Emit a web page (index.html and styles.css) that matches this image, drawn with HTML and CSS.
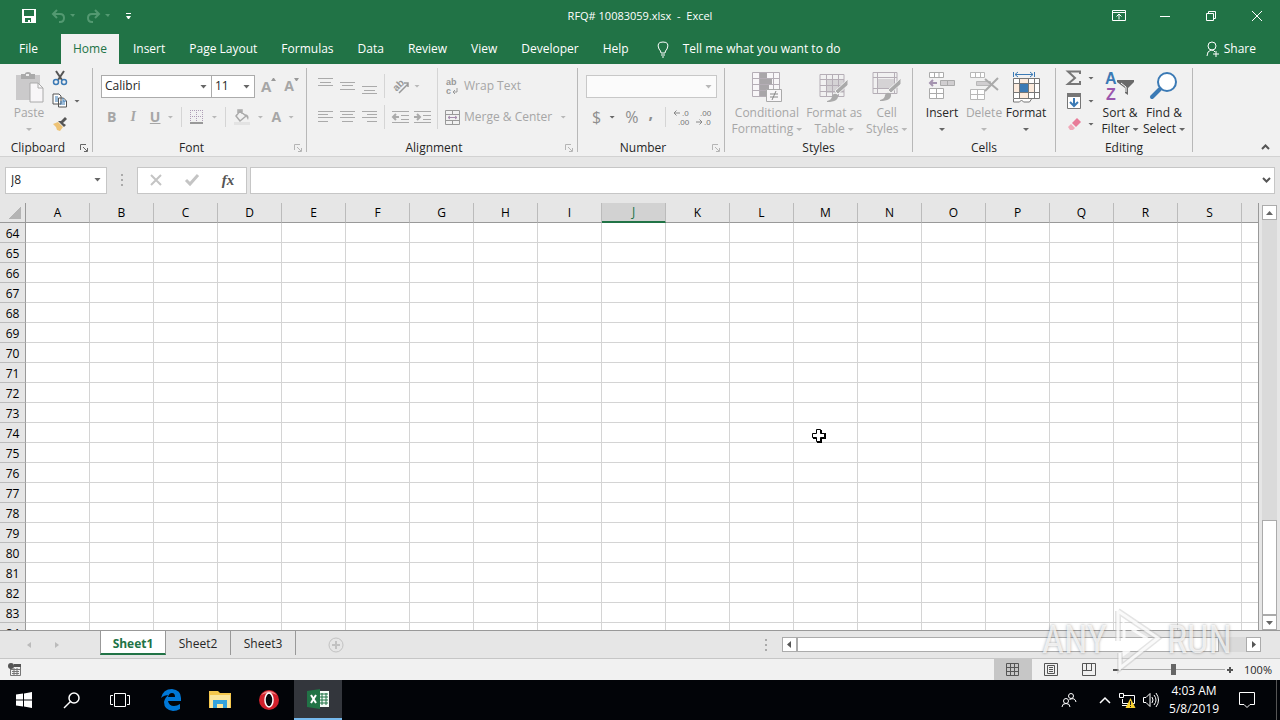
FILE: index.html
```html
<!DOCTYPE html>
<html lang="en">

<head>
    <meta charset="UTF-8">
    <meta name="viewport" content="width=device-width, initial-scale=1.0">
    <title>RFQ# 10083059.xlsx - Excel</title>
    <link rel="stylesheet" href="styles.css">
</head>

<body>
    <header class="titlebar">
        <div class="quick">
            <button aria-label="Save"><svg width="14" height="14" viewBox="0 0 14 14"><path d="M0 0h14v14H0z" fill="#fff"/><path d="M2 1h10v6H2zM3 9h8v4H3z" fill="#217346"/><path d="M6 11h2v2H6zM9 9h2v4H9z" fill="#fff"/></svg></button>
            <button class="faded" aria-label="Undo"><svg width="24" height="14" viewBox="0 0 24 14"><path d="M6 1L2 5l4 4M2 5h7q4 0 4 4t-4 4H8" fill="none" stroke="#539971" stroke-width="2"/><path d="M19 5h5l-2 3z" fill="#539971"/></svg></button>
            <button class="faded" aria-label="Redo"><svg width="24" height="14" viewBox="0 0 24 14"><path d="M9 1l4 4-4 4M13 5H6q-4 0-4 4t4 4h1" fill="none" stroke="#539971" stroke-width="2"/><path d="M19 5h5l-2 3z" fill="#539971"/></svg></button>
            <button aria-label="Customize"><svg width="7" height="7" viewBox="0 0 7 7"><path d="M1 0h5v1H1zM1 3h5l-2 3H3z" fill="#fff"/></svg></button>
        </div>
        <h1>RFQ# 10083059.xlsx&nbsp; -&nbsp; Excel</h1>
        <div class="window-buttons">
            <button aria-label="Ribbon options"><svg width="14" height="12" viewBox="0 0 14 12"><path d="M.5.5h13v10H.5zM1 2.500h12M7 9.500V4M4.500 6.500L7 4l2.500 2.500" fill="none" stroke="#fff"/></svg></button>
            <button aria-label="Minimize"><svg width="10" height="10" viewBox="0 0 10 10"><path d="M0 5h10v1H0z" fill="#fff"/></svg></button>
            <button aria-label="Restore"><svg width="10" height="10" viewBox="0 0 10 10"><path d="M.5 2.500h7v7h-7zM2.500 2V.5h7v7H8" fill="none" stroke="#fff"/></svg></button>
            <button aria-label="Close"><svg width="10" height="10" viewBox="0 0 10 10"><path d="M0 0l10 10M10 0L0 10" stroke="#fff"/></svg></button>
        </div>
    </header>

    <nav class="tabs">
        <button class="file">File</button>
        <button class="active">Home</button>
        <button>Insert</button>
        <button>Page Layout</button>
        <button>Formulas</button>
        <button>Data</button>
        <button>Review</button>
        <button>View</button>
        <button>Developer</button>
        <button>Help</button>
        <button class="tell"><svg width="12" height="17" viewBox="0 0 12 17"><path d="M4 12q0-2-2-4-3-7 4-7t4 7q-2 2-2 4zM4 14h4M5 16h2" fill="none" stroke="#fff"/></svg>Tell me what you want to do</button>
        <button class="share"><svg width="14" height="17" viewBox="0 0 14 17"><circle cx="6" cy="5" r="4" fill="none" stroke="#fff"/><path d="M1 15q0-5 4-6 3 0 4 2M7 13h6M10 10v6" fill="none" stroke="#fff"/></svg>Share</button>
    </nav>

    <main class="ribbon">
        <section class="group clipboard">
            <div class="controls">
                <button class="big off"><svg width="30" height="32" viewBox="0 0 30 32"><path d="M2 3h24v25H2z" fill="#cbcacb"/><path d="M7 2h4q0-2 3-2t3 2h4v5H7z" fill="#aaa"/><path d="M12 2h3v2h-3z" fill="#eee"/><path d="M16 11h8l5 5v14H16z" fill="#f8f6f8" stroke="#aaa"/><path d="M24 11v5h5" fill="none" stroke="#aaa"/></svg><span>Paste</span><i class="caret"></i></button>
                <div class="stack">
                    <button aria-label="Cut"><svg width="16" height="16" viewBox="0 0 16 16"><path d="M4 1l6 9M12 1L6 10" stroke="#555" stroke-width="2"/><circle cx="4" cy="12" r="2.500" fill="none" stroke="#3b7ab5" stroke-width="1.500"/><circle cx="12" cy="12" r="2.500" fill="none" stroke="#3b7ab5" stroke-width="1.500"/></svg></button>
                    <button aria-label="Copy"><svg width="16" height="16" viewBox="0 0 16 16"><path d="M1 1h6l2 2v8H1zM6.500 5h5l3 3v6h-8z" fill="#fff" stroke="#555"/><path d="M3 4h3M3 6h3M3 8h3M8 9h5M8 11h5M11 5v3h3" fill="none" stroke="#3b7ab5"/></svg><i class="caret dark"></i></button>
                    <button aria-label="Format Painter"><svg width="16" height="16" viewBox="0 0 16 16"><path d="M1 8l5-2 5 5-3 4-3-1-1-3z" fill="#eec376"/><path d="M6 5l6 6 2-2-3-2 4-4-2-2-4 4z" fill="#555"/></svg></button>
                </div>
            </div>
            <footer>Clipboard<svg class="launch dark" width="8" height="8" viewBox="0 0 8 8"><path d="M.5 6V.5H6M3 3l4 4M7.500 4v3.500H4"/></svg></footer>
        </section>

        <section class="group font">
            <div class="controls rows">
                <div class="row">
                    <span class="combo face"><select aria-label="Font"><option>Calibri</option></select></span><span class="combo size"><select aria-label="Font size"><option>11</option></select></span>
                    <button class="off grow" aria-label="Increase font size"><b>A</b><svg width="5" height="4" viewBox="0 0 5 4"><path d="M0 3l2-3h1l2 3z" fill="#999"/></svg></button>
                    <button class="off shrink" aria-label="Decrease font size"><b>A</b><svg width="5" height="4" viewBox="0 0 5 4"><path d="M0 0h5L3 3H2z" fill="#999"/></svg></button>
                </div>
                <div class="row letters">
                    <button class="off"><b>B</b></button>
                    <button class="off"><em>I</em></button>
                    <button class="off"><u>U</u><i class="caret"></i></button>
                    <hr>
                    <button class="off" aria-label="Borders"><svg width="14" height="14" viewBox="0 0 14 14"><path d="M.5 0v13M6.500 0v13M12.500 0v13M0 .5h13M0 6.500h13" stroke="#ae9eb6" stroke-dasharray="1 1"/><path d="M0 13h13" stroke="#999" stroke-width="2"/></svg><i class="caret"></i></button>
                    <hr>
                    <button class="off" aria-label="Fill Color"><svg width="16" height="16" viewBox="0 0 16 16"><path d="M6 2l6 5-6 5-4-5zM4 5V1h4v4" fill="none" stroke="#aaa" stroke-width="1.500"/><path d="M11 5q5 1 3 6l-2-4z" fill="#aaa"/><path d="M0 13h16v3H0z" fill="#e3e3e3"/></svg><i class="caret"></i></button>
                    <button class="off"><b>A</b><i class="caret"></i></button>
                </div>
            </div>
            <footer>Font<svg class="launch" width="8" height="8" viewBox="0 0 8 8"><path d="M.5 6V.5H6M3 3l4 4M7.500 4v3.500H4"/></svg></footer>
        </section>

        <section class="group alignment">
            <div class="controls">
                <div class="rows three">
                    <div class="row">
                        <button aria-label="Top Align"><svg class="lines" width="15" height="18" viewBox="0 0 15 18"><path d="M0 1.500h15M2 5.500h11M0 8.500h15"/></svg></button>
                        <button aria-label="Middle Align"><svg class="lines" width="15" height="18" viewBox="0 0 15 18"><path d="M0 5.500h15M2 8.500h11M0 12.500h15"/></svg></button>
                        <button aria-label="Bottom Align"><svg class="lines" width="15" height="18" viewBox="0 0 15 18"><path d="M0 9.500h15M2 13.500h11M0 16.500h15"/></svg></button>
                    </div>
                    <div class="row">
                        <button aria-label="Align Left"><svg class="lines" width="15" height="14" viewBox="0 0 15 14"><path d="M0 1.500h15M0 4.500h10M0 7.500h15M0 11.500h10"/></svg></button>
                        <button aria-label="Center"><svg class="lines" width="15" height="14" viewBox="0 0 15 14"><path d="M0 1.500h15M2 4.500h11M0 7.500h15M2 11.500h11"/></svg></button>
                        <button aria-label="Align Right"><svg class="lines" width="15" height="14" viewBox="0 0 15 14"><path d="M0 1.500h15M5 4.500h10M0 7.500h15M5 11.500h10"/></svg></button>
                    </div>
                </div>
                <div class="rows bordered">
                    <div class="row">
                        <button aria-label="Orientation"><svg width="18" height="18" viewBox="0 0 18 18"><text x="1" y="12" font-size="10" font-weight="bold" fill="#999" transform="rotate(-45 6 9)">ab</text><path d="M7 16l9-9M12 6h4v4" fill="none" stroke="#999" stroke-width="1.500"/></svg><i class="caret"></i></button>
                    </div>
                    <div class="row">
                        <button aria-label="Decrease Indent"><svg class="lines" width="17" height="14" viewBox="0 0 17 14"><path d="M0 1.500h17M9 5.500h8M9 9.500h8M0 12.500h17"/><path d="M1 7h6M4 4L1 7l3 3" stroke-width="2"/></svg></button>
                        <button aria-label="Increase Indent"><svg class="lines" width="17" height="14" viewBox="0 0 17 14"><path d="M0 1.500h17M9 5.500h8M9 9.500h8M0 12.500h17"/><path d="M0 7h6M3 4l3 3-3 3" stroke-width="2"/></svg></button>
                    </div>
                </div>
                <div class="rows wide">
                    <div class="row">
                        <button class="off"><svg width="15" height="20" viewBox="0 0 15 20"><text x="1" y="9" font-size="9" font-weight="bold" fill="#999">ab</text><text x="1" y="18" font-size="9" font-weight="bold" fill="#999">c</text><path d="M12 12v4H8M10 14l-2 2 2 2" fill="none" stroke="#999"/></svg>Wrap Text</button>
                    </div>
                    <div class="row">
                        <button class="off"><svg width="15" height="15" viewBox="0 0 15 15"><path d="M.5.5h14v14H.5zM.5 4.500h14M.5 10.500h14M7.500 0v4M7.500 11v4" fill="none" stroke="#999"/><path d="M3 7.500h9M5 6L3 7.500 5 9M10 6l2 1.500L10 9" fill="none" stroke="#a58cad"/></svg>Merge &amp; Center<i class="caret"></i></button>
                    </div>
                </div>
            </div>
            <footer>Alignment<svg class="launch" width="8" height="8" viewBox="0 0 8 8"><path d="M.5 6V.5H6M3 3l4 4M7.500 4v3.500H4"/></svg></footer>
        </section>

        <section class="group number">
            <div class="controls rows">
                <div class="row"><span class="combo format"><select aria-label="Number Format" disabled><option></option></select></span></div>
                <div class="row symbols">
                    <button class="off">$<i class="caret dark"></i></button>
                    <button class="off">%</button>
                    <button class="off"><b>,</b></button>
                    <hr>
                    <button aria-label="Increase Decimal"><svg width="16" height="18" viewBox="0 0 16 18"><text x="8" y="8" font-size="8" fill="#777">.0</text><text x="4" y="17" font-size="8" fill="#777">.00</text><path d="M0 5h6M2.500 2.500L0 5l2.500 2.500" fill="none" stroke="#888"/></svg></button>
                    <button aria-label="Decrease Decimal"><svg width="16" height="18" viewBox="0 0 16 18"><text x="4" y="8" font-size="8" fill="#777">.00</text><text x="8" y="17" font-size="8" fill="#777">.0</text><path d="M0 14h6M3.500 11.500L6 14l-2.500 2.500" fill="none" stroke="#888"/></svg></button>
                </div>
            </div>
            <footer>Number<svg class="launch" width="8" height="8" viewBox="0 0 8 8"><path d="M.5 6V.5H6M3 3l4 4M7.500 4v3.500H4"/></svg></footer>
        </section>

        <section class="group styles">
            <div class="controls">
                <button class="big off"><svg width="30" height="32" viewBox="0 0 30 32"><path d="M1 1h27v24H1z" fill="#f8f6f8"/><path d="M8 1h7v5h5v6h-3v6h-2v7H8z" fill="#a9a6a9"/><path d="M.5.5h27v24H.5zM.5 6.500h27M.5 12.500h27M.5 18.500h27M7.500 0v25M21.500 0v25" fill="none" stroke="#b5aeb6"/><path d="M14.500 17.500h15v12h-15z" fill="#f8f6f8" stroke="#aaa"/><path d="M18 22h8M18 25h8M24 19l-4 9" stroke="#888"/></svg><span>Conditional<br>Formatting<i class="caret"></i></span></button>
                <button class="big off"><svg width="30" height="32" viewBox="0 0 30 32"><path d="M8 8h17v13H8z" fill="#d5d3d5"/><path d="M1 2.500h24v22H1zM1 7.500h24M1 13.500h24M1 19.500h24M7.500 2v22M13.500 2v22M19.500 2v22" fill="none" stroke="#b5aeb6"/><path d="M29 7v6l-10 9-3-3z" fill="#aaa" stroke="#f1f1f1"/><path d="M8 29q5-1 5-5 2-4 6-1 1 7-11 7z" fill="#aaa"/></svg><span>Format as<br>Table<i class="caret"></i></span></button>
                <button class="big off"><svg width="30" height="32" viewBox="0 0 30 32"><path d="M6 7h16v10H6z" fill="#d5d3d5"/><path d="M1 .5h24v21H1zM1 5.500h24M1 16.500h24M5.500 0v22M22.500 0v22" fill="none" stroke="#b5aeb6"/><path d="M29 6v6l-10 9-3-3z" fill="#aaa" stroke="#f1f1f1"/><path d="M8 28q5-1 5-5 2-4 6-1 1 7-11 7z" fill="#aaa"/></svg><span>Cell<br>Styles<i class="caret"></i></span></button>
            </div>
            <footer>Styles</footer>
        </section>

        <section class="group cells">
            <div class="controls">
                <button class="big"><svg width="30" height="32" viewBox="0 0 30 32"><path d="M2.500.5h14v5h-14zM7.500.5v5M12 .5v5M2.500 16.500h14v10h-14zM2.500 21.500h14M9.500 16v11" fill="#fff" stroke="#aaa"/><path d="M13.500 8.500h14v5h-14zM20.500 8v6" fill="#d0ced0" stroke="#aaa"/><path d="M3 11h7M6 8l-3 3 3 3" fill="none" stroke="#a594b0" stroke-width="2"/></svg><span>Insert</span><i class="caret dark"></i></button>
                <button class="big off"><svg width="30" height="32" viewBox="0 0 30 32"><path d="M1.500.5h14v5h-14zM6.500.5v5M11.500.5v5M1.500 17.500h14v10h-14zM1.500 22.500h14M8.500 17v11" fill="#fff" stroke="#b8b8b8"/><path d="M7.500 9.500h14v4h-14z" fill="#d0ced0" stroke="#b8b8b8"/><path d="M16 7l13 11M29 6L16 19" stroke="#aaa" stroke-width="2"/></svg><span>Delete</span><i class="caret"></i></button>
                <button class="big"><svg width="30" height="32" viewBox="0 0 30 32"><path d="M2.500 6.500h26v20h-26z" fill="#fff"/><path d="M9 6.500h8v5H9zM2.500 12h6v8h-6zM18 12h5v8h-5zM9 21h8v5H9z" fill="#fcebdd"/><path d="M2.500 6.500h26v20h-26zM2 11.500h26M2 20.500h26M8.500 6v20M17.500 6v20M23.500 6v20" fill="none" stroke="#777"/><path d="M9 12h8v8H9z" fill="#3b7ab5"/><path d="M2.500 0v5M23.500 0v5M4 2.500h18M7 0L4 2.500 7 5M19 0l3 2.500L19 5" fill="none" stroke="#3b7ab5"/><path d="M2.500 27v3h6l2-2 2 2h6l2-3" fill="#fff" stroke="#777"/></svg><span>Format</span><i class="caret dark"></i></button>
            </div>
            <footer>Cells</footer>
        </section>

        <section class="group editing">
            <div class="controls">
                <div class="stack">
                    <button aria-label="AutoSum"><svg width="16" height="16" viewBox="0 0 16 16"><path d="M14 4V1.500H2L9 8l-7 6h12v-3" fill="none" stroke="#777" stroke-width="2"/></svg><i class="caret dark"></i></button>
                    <button aria-label="Fill"><svg width="16" height="16" viewBox="0 0 16 16"><path d="M1.500.5h13v15h-13z" fill="#fff" stroke="#777"/><path d="M1 0h14v4H1z" fill="#777"/><path d="M8 5v8M4 9l4 4 4-4" fill="none" stroke="#3b7ab5" stroke-width="2"/></svg><i class="caret dark"></i></button>
                    <button aria-label="Clear"><svg width="16" height="16" viewBox="0 0 16 16"><path d="M6 7l5-5 4 4-5 5z" fill="#e87b98"/><path d="M5 8l4 4-2 2H4l-2-3z" fill="#f1a9b9"/></svg><i class="caret dark"></i></button>
                </div>
                <button class="big"><svg width="30" height="32" viewBox="0 0 30 32"><text x="0" y="12" font-size="16" font-weight="bold" fill="#3b7ab5">A</text><text x="1" y="28" font-size="16" font-weight="bold" fill="#9b57ad">Z</text><path d="M12 8h17v2l-6 6v7l-3-2v-5l-8-6z" fill="#6a6a6a"/><path d="M16 11l5 4v5" fill="none" stroke="#fff"/></svg><span>Sort &amp;<br>Filter<i class="caret dark"></i></span></button>
                <button class="big"><svg width="30" height="32" viewBox="0 0 30 32"><circle cx="18" cy="10" r="9" fill="#fff" stroke="#3b7ab5" stroke-width="2"/><path d="M11 17l-8 8" stroke="#3b7ab5" stroke-width="4" stroke-linecap="round"/></svg><span>Find &amp;<br>Select<i class="caret dark"></i></span></button>
            </div>
            <footer>Editing</footer>
        </section>
        <button class="collapse" aria-label="Collapse the Ribbon"><svg width="9" height="6" viewBox="0 0 9 6"><path d="M1 5l3.500-3.500L8 5" fill="none" stroke="#555" stroke-width="2"/></svg></button>
    </main>

    <div class="formula">
        <span class="combo namebox"><input type="text" aria-label="Name Box" value="J8"></span>
        <span class="dots"></span>
        <div class="entry">
            <button aria-label="Cancel"><svg width="12" height="12" viewBox="0 0 12 12"><path d="M1 1l10 10M11 1L1 11" stroke="#c4c4c4" stroke-width="2"/></svg></button>
            <button aria-label="Enter"><svg width="14" height="12" viewBox="0 0 14 12"><path d="M1 6l4 4 8-9" fill="none" stroke="#c4c4c4" stroke-width="3"/></svg></button>
            <button class="fx">fx</button>
        </div>
        <div class="bar"><input type="text" aria-label="Formula Bar"><svg width="9" height="6" viewBox="0 0 9 6"><path d="M1 1l3.500 3.500L8 1" fill="none" stroke="#555" stroke-width="2"/></svg></div>
    </div>

    <div class="workspace">
        <div class="sheet">
            <table>
                <thead><tr id="columns"><th class="corner"></th></tr></thead>
                <tbody id="cells"></tbody>
            </table>
        </div>
        <div class="scroll vertical">
            <button aria-label="Scroll up"><svg width="7" height="4" viewBox="0 0 7 4"><path d="M0 4l3.500-4L7 4z" fill="#666"/></svg></button>
            <div class="track"><div class="thumb"></div></div>
            <button aria-label="Scroll down"><svg width="7" height="4" viewBox="0 0 7 4"><path d="M0 0l3.500 4L7 0z" fill="#666"/></svg></button>
        </div>
        <svg class="cursor" width="16" height="16" viewBox="0 0 16 16"><path d="M6 2h5v3h4v6h-4v4H6v-4H2V6h4z" fill="#000"/><path d="M5.500 1.500h4v4h4v4h-4v4h-4v-4h-4v-4h4z" fill="#fff" stroke="#000"/></svg>
    </div>

    <div class="sheets">
        <div class="arrows">
            <button aria-label="Previous sheet"><svg width="4" height="6" viewBox="0 0 4 6"><path d="M4 0v6L0 3z" fill="#bbb"/></svg></button>
            <button aria-label="Next sheet"><svg width="4" height="6" viewBox="0 0 4 6"><path d="M0 0v6l4-3z" fill="#bbb"/></svg></button>
        </div>
        <button class="tab active">Sheet1</button>
        <button class="tab">Sheet2</button>
        <button class="tab">Sheet3</button>
        <button class="add" aria-label="New sheet"><svg width="16" height="16" viewBox="0 0 16 16"><circle cx="8" cy="8" r="7" fill="none" stroke="#c2c2c2"/><path d="M8 4v8M4 8h8" stroke="#c2c2c2" stroke-width="2"/></svg></button>
        <span class="dots"></span>
        <div class="scroll horizontal">
            <button aria-label="Scroll left"><svg width="4" height="7" viewBox="0 0 4 7"><path d="M4 0v7L0 3.500z" fill="#555"/></svg></button>
            <div class="track"><div class="thumb"></div></div>
            <button aria-label="Scroll right"><svg width="4" height="7" viewBox="0 0 4 7"><path d="M0 0v7l4-3.500z" fill="#555"/></svg></button>
        </div>
    </div>

    <div class="status">
        <button class="macro" aria-label="Record macro"><svg width="14" height="14" viewBox="0 0 14 14"><path d="M2.500 3.500h10v9h-10zM2 6.500h10M4 8.500h7M4 10.500h7M6 5v7M9 5v7" fill="none" stroke="#777"/><path d="M6 1h7v3H6z" fill="#555"/><circle cx="3" cy="3" r="3" fill="#555"/></svg></button>
        <button class="view active" aria-label="Normal"><svg width="14" height="14" viewBox="0 0 14 14"><path d="M.5.500h12v12H.5zM.5 4.500h12M.5 8.500h12M4.500 0v13M8.500 0v13" fill="none" stroke="#555"/></svg></button>
        <button class="view" aria-label="Page Layout"><svg width="14" height="14" viewBox="0 0 14 14"><path d="M.5.500h13v12H.5zM3.500 2.500h7v8h-7zM5 4.500h4M5 6.500h4M5 8.500h4" fill="none" stroke="#555"/></svg></button>
        <button class="view" aria-label="Page Break Preview"><svg width="14" height="14" viewBox="0 0 14 14"><path d="M.5.500h13v12H.5zM4.500 0v8M9.500 0v8M0 7.500h10" fill="none" stroke="#555"/></svg></button>
        <div class="zoom">
            <button aria-label="Zoom out"><svg width="8" height="8" viewBox="0 0 8 8"><path d="M1 3h6v2H1z" fill="#555"/></svg></button>
            <input type="range" aria-label="Zoom" min="0" max="200" value="100">
            <button aria-label="Zoom in"><svg width="8" height="8" viewBox="0 0 8 8"><path d="M1 3h6v2H1zM3 1h2v6H3z" fill="#555"/></svg></button>
            <span>100%</span>
        </div>
    </div>

    <div class="taskbar">
        <div class="system">
            <button aria-label="Start"><svg width="16" height="16" viewBox="0 0 16 16"><path d="M0 2.500L7 1.500v6H0zM8 1.400L16 0v7.500H8zM0 8.500h7v6l-7-1zM8 8.500h8V16l-8-1.400z" fill="#fff"/></svg></button>
            <button aria-label="Search"><svg width="18" height="18" viewBox="0 0 18 18"><circle cx="11" cy="7" r="5" fill="none" stroke="#fff" stroke-width="1.500"/><path d="M8 10l-7 7" stroke="#fff" stroke-width="1.500"/></svg></button>
            <button aria-label="Task View"><svg width="20" height="16" viewBox="0 0 20 16"><path d="M4.500 1.500h11v13h-11zM3 3.500H.5v9H3M17 3.500h2.500v9H17" fill="none" stroke="#fff"/></svg></button>
        </div>
        <div class="apps">
            <button aria-label="Edge"><svg width="22" height="22" viewBox="0 0 22 22"><path d="M1 9Q3 0 12 0q9 1 9 9v3H8q1 5 6 5 3 0 6-2v5q-3 2-7 2-9-1-9-9 1-5 5-7-5 0-8 3zm7-1h7q0-4-3-4T8 8z" fill="#0078d7"/></svg></button>
            <button aria-label="File Explorer"><svg width="22" height="20" viewBox="0 0 22 20"><path d="M0 1h9l2 2h11v15H0z" fill="#f5c84d"/><path d="M1 5h20v13H1z" fill="#fce79d"/><path d="M4 18v-8h14v8h-4v-4H8v4z" fill="#35a4dd"/></svg></button>
            <button aria-label="Opera"><svg width="22" height="22" viewBox="0 0 22 22"><circle cx="11" cy="11" r="10" fill="#d2202b"/><path d="M3 6q8-8 16 0Q11 2 3 6z" fill="#f08a8a"/><ellipse cx="11" cy="11" rx="4" ry="7" fill="#06070b" stroke="#fff" stroke-width="1.500"/></svg></button>
            <button class="running" aria-label="Excel"><svg width="22" height="20" viewBox="0 0 22 20"><path d="M12 2h10v16H12z" fill="#f5fbf7"/><path d="M15 4v12M19 4v12M13 5h8M13 8h8M13 11h8M13 14h8" stroke="#217346"/><path d="M0 2l13-2v20L0 18z" fill="#217346"/><path d="M4 6l5 8M9 6l-5 8" stroke="#fff" stroke-width="2"/></svg></button>
        </div>
        <div class="tray">
            <button aria-label="People"><svg width="16" height="16" viewBox="0 0 16 16"><circle cx="10" cy="4" r="2.500" fill="none" stroke="#fff"/><circle cx="5" cy="9" r="2.500" fill="none" stroke="#fff"/><path d="M1 15q0-3.500 4-3.500T9 15M8.500 7.500Q14 5 15 10" fill="none" stroke="#fff"/></svg></button>
            <button aria-label="Show hidden icons"><svg width="12" height="8" viewBox="0 0 12 8"><path d="M1 7l5-5 5 5" fill="none" stroke="#fff" stroke-width="1.500"/></svg></button>
            <button aria-label="Network"><svg width="16" height="15" viewBox="0 0 16 15"><path d="M4 2.500h11.500v8H3.500V6M3 12.500h6M.5.500h4v4h-4z" fill="none" stroke="#fff"/><path d="M11.500 5l5 10h-10z" fill="#f8d030"/><path d="M11 8h1v4h-1zM11 13h1v1h-1z" fill="#222"/></svg></button>
            <button aria-label="Volume"><svg width="16" height="16" viewBox="0 0 16 16"><path d="M.5 5.500H3l4-4v13l-4-4H.5zM9 5q2 3 0 6M11 3q4 5 0 10M13 1q5 7 0 14" fill="none" stroke="#fff"/></svg></button>
            <div class="clock"><span>4:03 AM</span><span>5/8/2019</span></div>
            <button aria-label="Notifications"><svg width="16" height="16" viewBox="0 0 16 16"><path d="M.5.500h15v12H11l-3 3-3-3H.5z" fill="none" stroke="#fff"/></svg></button>
        </div>
    </div>

    <div class="watermark"><span>ANY</span><svg width="60" height="64" viewBox="0 0 60 64"><path d="M11 3L51 30 13 60V45M11 3v30" fill="none" stroke="#bbb" stroke-opacity=".4" stroke-width="6"/><path d="M11 3L51 30 13 60V45M11 3v30M17 16l22 14-22 16z" fill="none" stroke="#fff" stroke-opacity=".8" stroke-width="3"/></svg><span>RUN</span></div>

    <script>
        var columns = "ABCDEFGHIJKLMNOPQRST";
        var head = document.getElementById("columns");
        var body = document.getElementById("cells");

        for (var letter of columns) {
            var th = document.createElement("th");
            // the last column only shows its left edge
            th.textContent = letter == "T" ? "" : letter;
            if (letter == "J") th.className = "selected";
            head.appendChild(th);
        }

        for (var row = 64; row <= 84; row++) {
            var tr = document.createElement("tr");
            var number = document.createElement("th");
            number.textContent = row;
            tr.appendChild(number);
            for (var i = 0; i < columns.length; i++) {
                tr.appendChild(document.createElement("td"));
            }
            body.appendChild(tr);
        }
    </script>
</body>

</html>
```
FILE: styles.css
```css
* {
    box-sizing: border-box;
}

body {
    margin: 0;
    height: 100vh;
    display: flex;
    flex-direction: column;
    overflow: hidden;
    background: #e6e6e6;
    color: #262626;
}

body,
button,
input,
select {
    font-family: "Open Sans", "Noto Sans", sans-serif;
    font-size: 12px;
    line-height: 16px;
}

button {
    display: flex;
    align-items: center;
    justify-content: center;
    padding: 0;
    border: none;
    background: none;
    color: inherit;
    white-space: nowrap;
}

svg {
    display: block;
    flex: none;
    overflow: visible;
}

svg text {
    font-family: "Liberation Sans", Arial, sans-serif;
}

/* title bar */

.titlebar {
    display: grid;
    grid-template-columns: 1fr auto 1fr;
    align-items: center;
    height: 32px;
    flex: none;
    background: #217346;
    color: #fff;
}

.titlebar h1 {
    margin: 0;
    font-size: 11px;
    font-weight: normal;
}

.quick {
    display: flex;
    gap: 11px;
    padding-left: 22px;
}

.quick button:first-child {
    margin-right: 4px;
}

.quick button:last-child {
    margin-left: 4px;
}

.window-buttons {
    display: flex;
    justify-content: flex-end;
}

.window-buttons button {
    width: 46px;
    height: 30px;
}

/* ribbon tabs */

.tabs {
    display: flex;
    height: 32px;
    flex: none;
    padding: 2px 12px 0 7px;
    background: #217346;
    color: #fff;
}

.tabs button {
    padding: 0 12px;
}

.tabs .file {
    margin-right: 11px;
}

.tabs .active {
    margin-right: 2px;
    background: #f1f1f1;
    color: #217346;
}

.tabs .tell {
    gap: 14px;
    margin-left: 4px;
}

.tabs .share {
    gap: 4px;
    margin-left: auto;
}

/* ribbon */

.ribbon {
    display: flex;
    height: 93px;
    flex: none;
    padding: 4px 10px 4px 0;
    background: #f1f1f1;
    border-bottom: 1px solid #d2d2d2;
}

.group {
    display: flex;
    flex-direction: column;
    border-right: 1px solid #b8b8b8;
}

.clipboard { width: 93px; }
.font { width: 214px; }
.alignment { width: 271px; }
.number { width: 147px; }
.styles { width: 188px; }
.cells { width: 143px; }
.editing { width: 137px; }

.group footer {
    display: flex;
    justify-content: center;
    position: relative;
    height: 8px;
    padding-right: 16px;
    line-height: 8px;
}

.cells footer,
.editing footer,
.styles footer {
    padding-right: 0;
}

.launch {
    position: absolute;
    right: 4px;
    bottom: 0;
    fill: none;
    stroke: #b5b5b5;
}

.launch.dark {
    stroke: #666;
}

.controls {
    display: flex;
    flex: 1;
    align-items: flex-start;
}

.rows {
    display: flex;
    flex-direction: column;
    gap: 7px;
    padding-top: 6px;
}

.row {
    display: flex;
    align-items: center;
    height: 24px;
}

.row hr {
    width: 1px;
    height: 20px;
    margin: 0;
    border: none;
    background: #d5d5d5;
}

.off {
    color: #a6a6a6;
}

.caret {
    display: inline-block;
    flex: none;
    width: 6px;
    height: 3px;
    background: #b8b8b8;
    clip-path: polygon(0 0, 100% 0, 50% 100%);
}

.caret.dark {
    background: #666;
}

.big {
    flex-direction: column;
    justify-content: flex-start;
    padding-top: 4px;
    gap: 1px;
}

.big > .caret {
    margin-top: 6px;
}

.big span .caret {
    margin: 0 0 2px 3px;
}

.stack {
    display: flex;
    flex-direction: column;
    gap: 7px;
    padding-top: 2px;
}

.stack button {
    justify-content: flex-start;
    gap: 6px;
}

.clipboard .controls {
    padding-left: 14px;
    gap: 8px;
}

.clipboard .big {
    width: 30px;
}

.combo {
    display: flex;
    position: relative;
    height: 23px;
    background: #fff;
    border: 1px solid #ababab;
}

.combo::after {
    content: "";
    position: absolute;
    right: 4px;
    top: 9px;
    width: 7px;
    height: 4px;
    background: #666;
    clip-path: polygon(0 0, 100% 0, 50% 100%);
}

.combo select,
.combo input {
    flex: 1;
    min-width: 0;
    padding: 0 3px;
    border: none;
    background: none;
    color: #262626;
    appearance: none;
}

.font .controls {
    padding-left: 8px;
}

.face { width: 111px; }

.size {
    width: 43px;
    border-left: none;
}

.grow b {
    font-size: 15px;
}

.grow,
.shrink {
    align-items: flex-start;
    margin-left: 6px;
}

.shrink {
    margin-left: 8px;
}

.shrink b {
    font-size: 14px;
}

.letters {
    padding-left: 6px;
    gap: 8px;
}

.letters b,
.letters u,
.letters em {
    font-size: 14px;
    font-weight: bold;
}

.letters em {
    font-family: "Liberation Serif", serif;
    padding: 0 6px;
}

.letters button {
    gap: 7px;
}

.lines {
    fill: none;
    stroke: #aaa;
}

.three {
    padding-left: 11px;
    padding-right: 7px;
}

.three .row {
    gap: 7px;
}

.bordered .row {
    width: 53px;
    gap: 5px;
    padding-left: 7px;
    border-left: 1px solid #d5d5d5;
}

.bordered button,
.wide button {
    gap: 4px;
}

.wide {
    padding-left: 7px;
    border-left: 1px solid #d5d5d5;
}

.wide .caret {
    margin-left: 4px;
}

.number .controls {
    padding-left: 8px;
}

.format {
    width: 131px;
    background: #fbfbfb;
    border-color: #c8c8c8;
}

.format::after {
    background: #b8b8b8;
}

.symbols {
    padding-left: 6px;
    gap: 10px;
}

.symbols button {
    gap: 8px;
    color: #8e8e8e;
    font-size: 16px;
}

.symbols b {
    padding-bottom: 8px;
}

.symbols hr {
    margin-left: 2px;
}

.symbols hr + button {
    margin-left: -2px;
}

.symbols button:last-child {
    margin-left: -4px;
}

.styles .controls {
    justify-content: center;
    gap: 4px;
    padding-left: 2px;
}

.cells .controls {
    justify-content: center;
    gap: 6px;
}

.cells .big {
    width: 36px;
}

.editing .controls {
    padding-left: 10px;
    gap: 8px;
}

.editing .big {
    width: 36px;
}

.collapse {
    align-self: flex-end;
    margin-left: auto;
    padding-bottom: 2px;
}

/* formula bar */

.formula {
    display: flex;
    align-items: center;
    height: 46px;
    flex: none;
    padding: 0 5px;
}

.formula .combo,
.entry,
.bar {
    height: 27px;
    background: #fff;
    border: 1px solid #c6c6c6;
}

.namebox {
    width: 102px;
}

.namebox input {
    padding-left: 5px;
}

.namebox::after {
    right: 5px;
    top: 10px;
}

.dots {
    width: 2px;
    height: 12px;
    background: repeating-linear-gradient(#aaa 0 2px, transparent 2px 5px);
}

.formula .dots {
    margin: 0 14px;
}

.entry {
    display: flex;
    width: 110px;
}

.entry button {
    flex: 1;
}

.entry .fx {
    color: #555;
    font: italic bold 15px "Liberation Serif", serif;
}

.bar {
    display: flex;
    align-items: center;
    flex: 1;
    margin-left: 3px;
    padding-right: 3px;
}

.bar input {
    flex: 1;
    border: none;
    background: none;
}

/* grid */

.workspace {
    display: flex;
    flex: 1;
    min-height: 0;
    position: relative;
    border-bottom: 1px solid #999;
}

.sheet {
    flex: 1;
    min-width: 0;
    overflow: hidden;
    border-right: 1px solid #999;
}

table {
    width: 1306px;
    table-layout: fixed;
    border-spacing: 0;
}

th,
td {
    width: 64px;
    height: 20px;
    padding: 0;
    background: #fff;
    border-right: 1px solid #d4d4d4;
    border-bottom: 1px solid #d4d4d4;
}

th {
    background: #e6e6e6;
    color: #000;
    font-weight: normal;
    line-height: 16px;
    border-color: #bbb;
}

tbody th {
    padding-top: 2px;
}

thead th {
    border-bottom-color: #999;
}

th:first-child {
    width: 26px;
    border-right-color: #999;
}

.corner {
    background: linear-gradient(135deg, transparent 50%, #b4b4b4 50%) 9px 4px / 12px 12px no-repeat #e6e6e6;
}

th.selected {
    background: #d2d2d2;
    color: #217346;
    border-bottom: 2px solid #217346;
}

.scroll {
    display: flex;
}

.scroll button {
    flex: none;
    width: 15px;
    height: 15px;
    background: #fff;
    border: 1px solid #ababab;
}

.track {
    display: flex;
    flex: 1;
    background: #dadada;
}

.thumb {
    background: #fff;
    border: 1px solid #ababab;
}

.vertical {
    flex-direction: column;
    padding: 2px 3px 0;
}

.vertical .track {
    flex-direction: column;
    justify-content: flex-end;
}

.vertical .thumb {
    height: 24%;
}

.cursor {
    position: absolute;
    left: 811px;
    top: 225px;
}

/* sheet tabs */

.sheets {
    display: flex;
    align-items: center;
    height: 27px;
    flex: none;
    padding-right: 19px;
}

.arrows {
    display: flex;
    gap: 24px;
    width: 100px;
    padding-left: 27px;
}

.tab {
    align-self: flex-start;
    width: 65px;
    height: 24px;
    padding-top: 2px;
    border-right: 1px solid #999;
}

.tab.active {
    width: 66px;
    padding-top: 4px;
    background: #fff;
    color: #217346;
    font-weight: bold;
    border-left: 1px solid #999;
    border-bottom: 2px solid #217346;
}

.add {
    margin-left: 32px;
}

.sheets .dots {
    margin-left: auto;
    margin-right: 15px;
}

.horizontal {
    width: 38%;
}

.horizontal .thumb {
    width: 94%;
}

/* status bar */

.status {
    display: flex;
    align-items: center;
    height: 22px;
    flex: none;
    padding: 0 8px;
    background: #f1f1f1;
    border-top: 1px solid #c6c6c6;
}

.macro {
    margin-right: auto;
}

.view {
    width: 38px;
    height: 21px;
}

.view.active {
    background: #c6c6c6;
}

.zoom {
    display: flex;
    align-items: center;
    margin-left: 4px;
}

.zoom input {
    width: 104px;
    height: 14px;
    margin: 0 1px;
    appearance: none;
    background: linear-gradient(#aaa, #aaa) center / 100% 1px no-repeat;
}

.zoom input::-webkit-slider-thumb {
    appearance: none;
    width: 5px;
    height: 11px;
    background: #666;
}

.zoom span {
    margin-left: 10px;
    font-size: 11px;
}

/* windows taskbar */

.taskbar {
    display: flex;
    height: 40px;
    flex: none;
    background: #020408;
    color: #fff;
}

.system,
.apps {
    display: flex;
}

.apps {
    gap: 1px;
    margin-left: 3px;
}

.system button,
.apps button {
    width: 48px;
    height: 40px;
}

.apps .running {
    background: #33363c;
    border-bottom: 2px solid #76b9ed;
}

.tray {
    display: flex;
    align-items: center;
    gap: 8px;
    margin-left: auto;
    margin-right: 3px;
    padding-right: 21px;
    border-right: 1px solid #555;
}

.tray button:first-child {
    margin-right: 14px;
}

.clock {
    display: flex;
    flex-direction: column;
    align-items: center;
    margin: 0 12px 0 2px;
    line-height: 18px;
}

.watermark {
    position: absolute;
    right: 48px;
    bottom: 48px;
    display: flex;
    align-items: center;
    color: rgba(255, 255, 255, .75);
    font-family: "Roboto Condensed", "Liberation Sans Narrow", "Liberation Sans", sans-serif;
    font-size: 38px;
    line-height: 64px;
    text-shadow: 0 0 3px rgba(0, 0, 0, .35);
    pointer-events: none;
}
```
